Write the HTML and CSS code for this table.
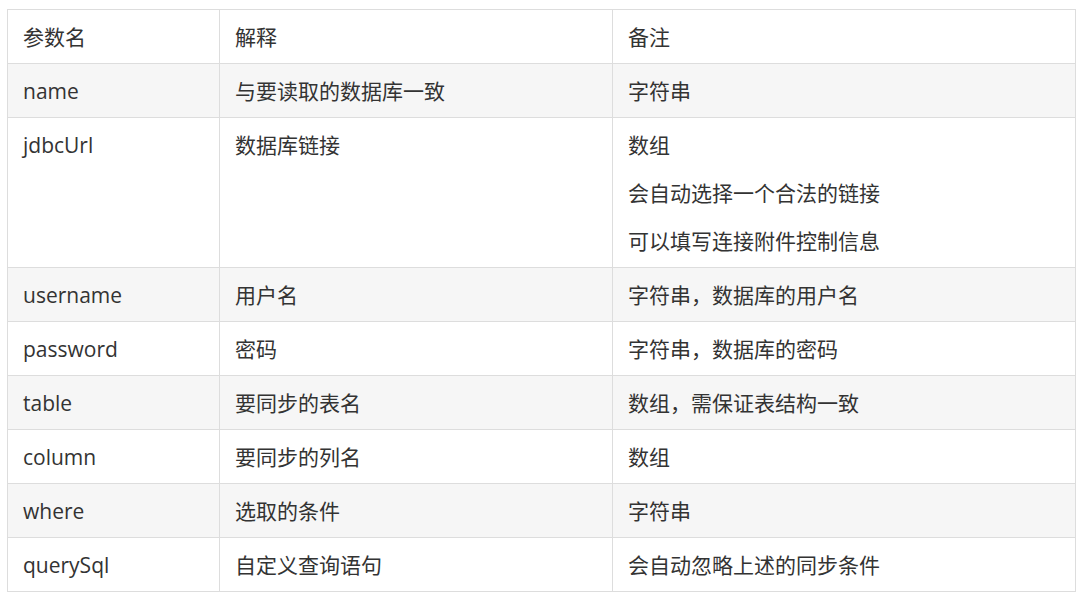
FILE: index.html
```html
<!DOCTYPE html>
<html lang="zh">
<head>
<meta charset="utf-8">
<link rel="stylesheet" href="styles.css">
</head>
<body>
<table class="params">
  <colgroup>
    <col class="c1"><col class="c2"><col class="c3">
  </colgroup>
  <thead>
    <tr><th>参数名</th><th>解释</th><th>备注</th></tr>
  </thead>
  <tbody>
    <tr><td>name</td><td>与要读取的数据库一致</td><td>字符串</td></tr>
    <tr><td>jdbcUrl</td><td>数据库链接</td><td><p>数组</p><p>会自动选择一个合法的链接</p><p>可以填写连接附件控制信息</p></td></tr>
    <tr><td>username</td><td>用户名</td><td>字符串，数据库的用户名</td></tr>
    <tr><td>password</td><td>密码</td><td>字符串，数据库的密码</td></tr>
    <tr><td>table</td><td>要同步的表名</td><td>数组，需保证表结构一致</td></tr>
    <tr><td>column</td><td>要同步的列名</td><td>数组</td></tr>
    <tr><td>where</td><td>选取的条件</td><td>字符串</td></tr>
    <tr><td>querySql</td><td>自定义查询语句</td><td>会自动忽略上述的同步条件</td></tr>
  </tbody>
</table>
</body>
</html>
```
FILE: styles.css
```css
html, body {
  margin: 0;
  padding: 0;
  background: #fff;
}
body {
  padding: 9px 0 0 7px;
  font-family: "Open Sans", "Noto Sans CJK SC", sans-serif;
  color: #333;
}
.params {
  border-collapse: collapse;
  width: 1068px;
  table-layout: fixed;
  font-size: 21px;
  line-height: 30px;
}
.c1 { width: 212px; }
.c2 { width: 393px; }
.c3 { width: 463px; }
.params th,
.params td {
  border: 1px solid #ddd;
  padding: 12px 15px 11px;
  text-align: left;
  vertical-align: top;
  font-weight: normal;
}
.params tbody tr:nth-child(odd) {
  background: #f6f6f6;
}
.params p {
  margin: 0 0 18px;
}
.params p:last-child {
  margin-bottom: 0;
}
```
